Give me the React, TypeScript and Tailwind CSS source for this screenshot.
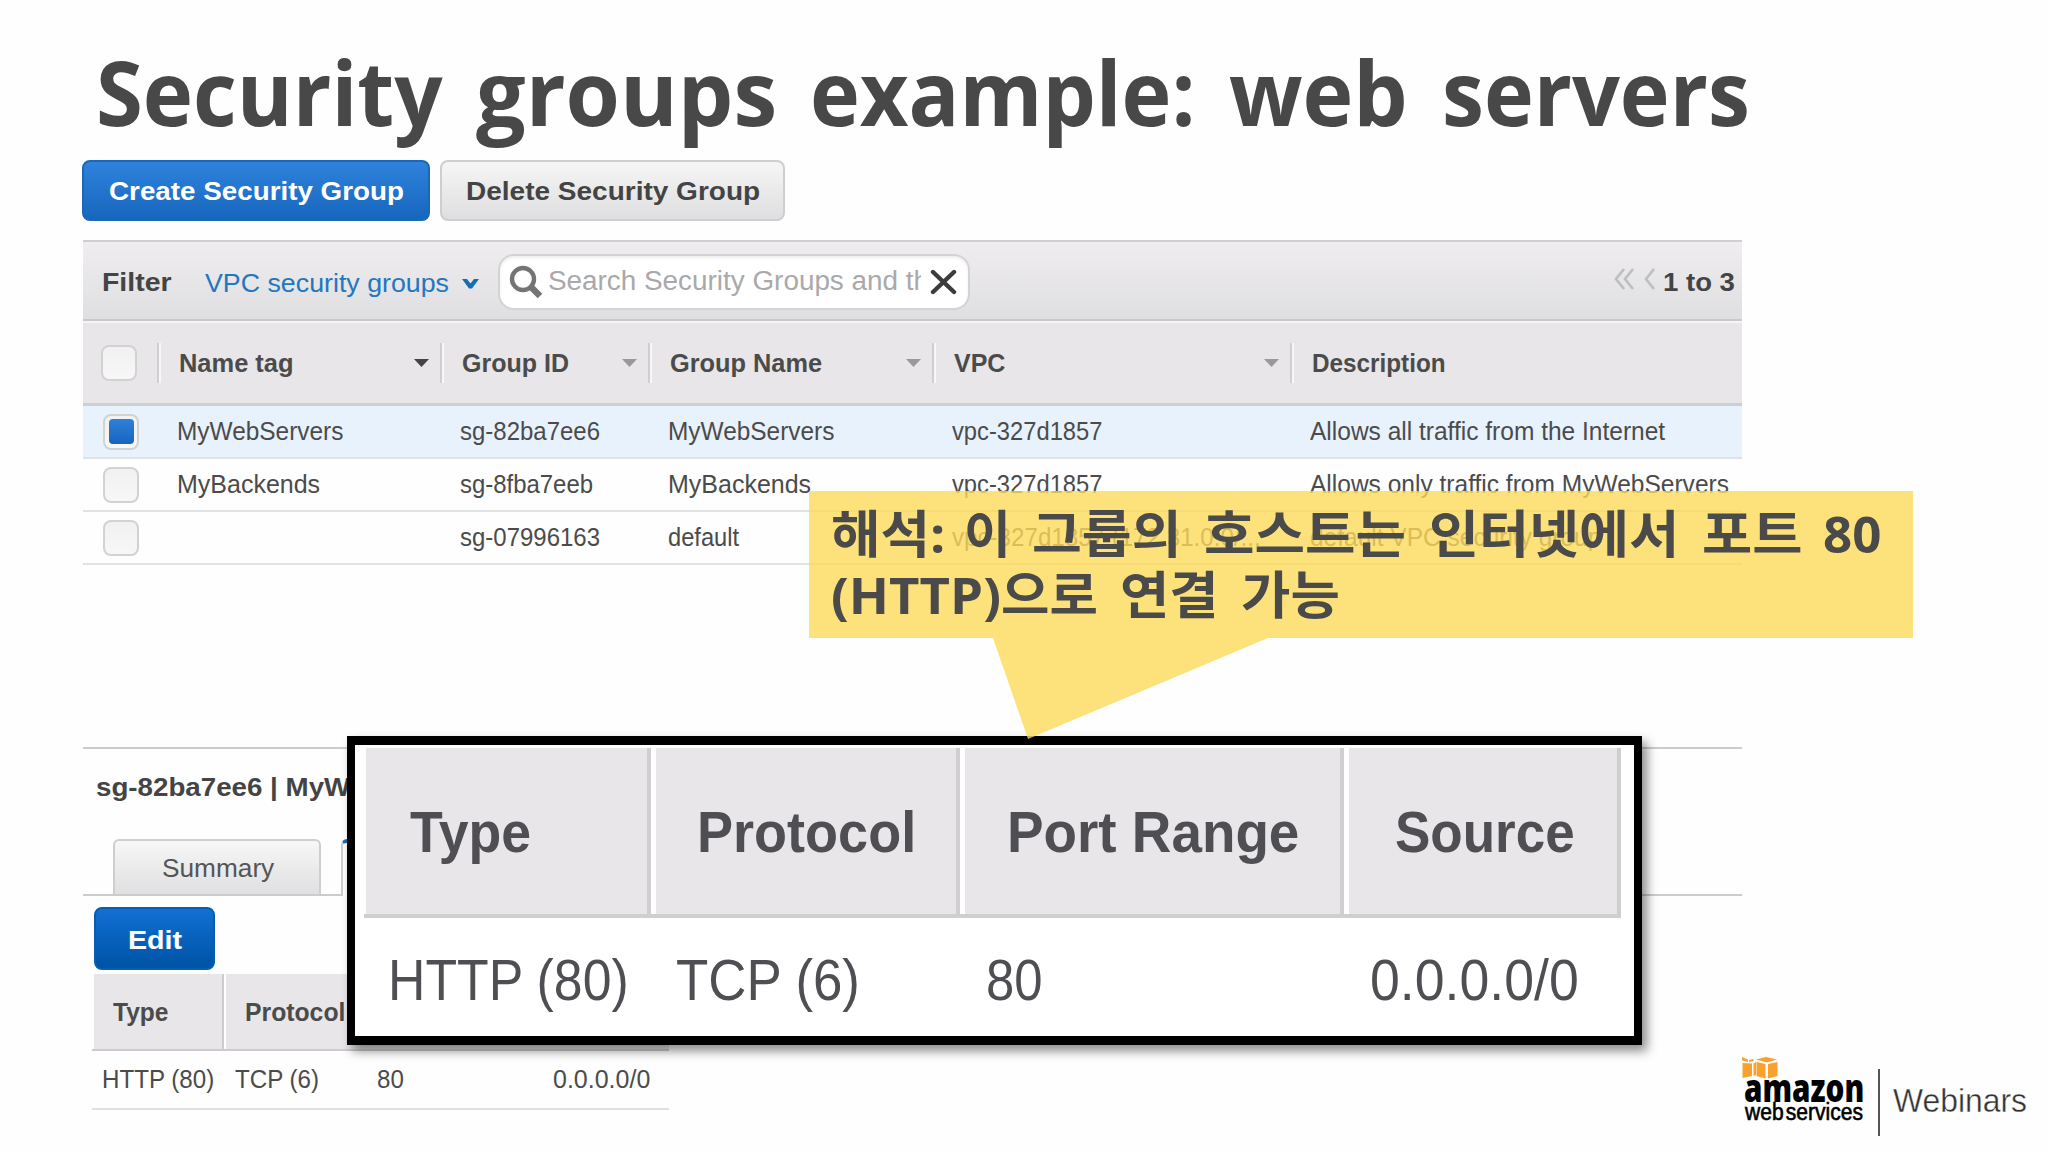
import { useLayoutEffect, useRef, useState } from "react";
import type { ReactNode } from "react";

/** Single line of text stretched or condensed horizontally to fill its box. */
function Fit({ className, children }: { className: string; children: ReactNode }) {
  const box = useRef<HTMLSpanElement>(null);
  const text = useRef<HTMLSpanElement>(null);
  const [scale, setScale] = useState(1);
  useLayoutEffect(() => {
    if (box.current && text.current) {
      setScale(box.current.offsetWidth / text.current.offsetWidth);
    }
  }, []);
  return (
    <span ref={box} className={`block shrink-0 ${className}`}>
      <span ref={text} className="inline-block origin-left whitespace-pre" style={{ transform: `scaleX(${scale})` }}>
        {children}
      </span>
    </span>
  );
}

function Checkbox({ checked = false }: { checked?: boolean }) {
  return (
    <span className="flex size-[36px] shrink-0 items-center justify-center rounded-lg border-2 border-[#d3d2d3] bg-linear-to-b from-[#f1f1f1] to-[#f7f7f7]">
      {checked && <span className="size-[25px] rounded bg-linear-to-b from-[#2f80d8] to-[#1564bd]" />}
    </span>
  );
}

function Arrow({ className }: { className: string }) {
  return (
    <svg viewBox="0 0 15 8" className={`h-2 w-[15px] ${className}`}>
      <path d="M0 0H15L7.5 8Z" fill="currentColor" />
    </svg>
  );
}

const headers = [
  { label: "Name tag", width: "w-[115px]", arrow: "text-[#444]" },
  { label: "Group ID", width: "w-[107px]", arrow: "text-[#999]" },
  { label: "Group Name", width: "w-[152px]", arrow: "text-[#999]" },
  { label: "VPC", width: "w-[51px]", arrow: "text-[#999]" },
  { label: "Description", width: "w-[134px]", arrow: "" },
];

const rows = [
  {
    checked: true,
    cells: [
      ["MyWebServers", "w-[166px]"],
      ["sg-82ba7ee6", "w-[140px]"],
      ["MyWebServers", "w-[166px]"],
      ["vpc-327d1857", "w-[150px]"],
      ["Allows all traffic from the Internet", "w-[355px]"],
    ],
  },
  {
    checked: false,
    cells: [
      ["MyBackends", "w-[143px]"],
      ["sg-8fba7eeb", "w-[133px]"],
      ["MyBackends", "w-[143px]"],
      ["vpc-327d1857", "w-[150px]"],
      ["Allows only traffic from MyWebServers", "w-[419px]"],
    ],
  },
  {
    checked: false,
    cells: [
      ["", "w-0"],
      ["sg-07996163", "w-[140px]"],
      ["default", "w-[71px]"],
      ["vpc-327d1857 (172.31.0.0/...", "w-[309px]"],
      ["default VPC security group", "w-[291px]"],
    ],
  },
];

function GroupTable() {
  return (
    <div className="text-[25px] text-[#4b4b4b]">
      <div className="grid h-[83px] grid-cols-[74px_283px_208px_284px_358px_451px] items-center border-b-3 border-[#cfced0] bg-[#e8e6e8]">
        <div className="pl-[18px]">
          <Checkbox />
        </div>
        {headers.map((h) => (
          <div key={h.label} className="flex h-10 items-center justify-between border-l-2 border-[#cfced0] pr-[11px]">
            <div className="flex h-full items-center border-l-2 border-[#f7f7f7] pl-[18px]">
              <Fit className={`font-bold leading-10 ${h.width}`}>{h.label}</Fit>
            </div>
            {h.arrow && <Arrow className={h.arrow} />}
          </div>
        ))}
      </div>
      {rows.map((row, i) => (
        <div
          key={i}
          className={`grid h-[53px] grid-cols-[74px_283px_208px_284px_358px_451px] items-center border-b-2 border-[#e1e2e3] ${row.checked ? "bg-[#e8f2fd]" : ""}`}
        >
          <div className="pl-[20px]">
            <Checkbox checked={row.checked} />
          </div>
          {row.cells.map(([text, width], j) => (
            <div key={j} className="-mt-[2px] pl-[20px]">
              {text && <Fit className={`leading-[48px] ${width}`}>{text}</Fit>}
            </div>
          ))}
        </div>
      ))}
    </div>
  );
}

function FilterBar() {
  return (
    <div className="flex h-[81px] items-center border-y-2 border-t-[#cfced0] border-b-[#c9c8ca] bg-linear-to-b from-[#efedef] to-[#dfdee0] pl-[19px] text-[26px]">
      <Fit className="mt-[3px] w-[70px] font-bold text-[#444]">Filter</Fit>
      <Fit className="mt-[6px] ml-[33px] w-[244px] text-[#2277bd]">VPC security groups</Fit>
      <svg viewBox="0 0 17 10" className="mt-[7px] ml-[13px] h-[10px] w-[17px]">
        <path d="M0 0H5L8.5 4.5L12 0H17L10 9.5H7Z" fill="#146eb4" />
      </svg>
      <div className="mt-[2px] ml-[19px] flex h-[56px] w-[472px] items-center rounded-[16px] border-2 border-[#d3d2d4] bg-white pl-[9px] shadow-[inset_0_2px_3px_#eee]">
        <svg viewBox="0 0 34 34" className="size-[34px]" fill="none" stroke="#747474">
          <circle cx="14" cy="14" r="11" strokeWidth="4.4" />
          <path d="M22 22L31 31" strokeWidth="6.5" />
        </svg>
        <div className="ml-[5px] w-[373px] overflow-hidden">
          <Fit className="w-[451px] text-[27px] text-[#a9a9a9]">Search Security Groups and their rul</Fit>
        </div>
        <svg viewBox="0 0 27 26" className="ml-[9px] h-[26px] w-[27px]" fill="none" stroke="#3c3c3c" strokeWidth="4.4" strokeLinecap="round">
          <path d="M3 3L24 23M24 3L3 23" />
        </svg>
      </div>
      <svg viewBox="0 0 42 22" className="mt-[-3px] ml-auto h-[22px] w-[42px]" fill="none" stroke="#bebebe" strokeWidth="2.6">
        <path d="M10 1L2 11L10 21M19 1L11 11L19 21M40 1L32 11L40 21" />
      </svg>
      <Fit className="mt-[3px] mr-[7px] ml-[7px] w-[72px] font-bold text-[#444]">1 to 3</Fit>
    </div>
  );
}

function RuleTable() {
  return (
    <div className="mt-[4px] ml-[9px] w-[577px] text-[25px] text-[#4b4b4b]">
      <div className="flex h-[77px] border-b-2 border-[#cccbcd] pl-[2px] font-bold">
        <div className="flex w-[130px] items-center border-r-2 border-[#cccbcd] bg-[#e8e6e8] pl-[19px]">
          <Fit className="mt-[3px] w-[56px]">Type</Fit>
        </div>
        <div className="ml-[2px] flex flex-1 items-center bg-[#e8e6e8] pl-[19px]">
          <Fit className="mt-[3px] w-[100px]">Protocol</Fit>
        </div>
      </div>
      <div className="flex h-[59px] items-center border-b-2 border-[#e0e0e1] pl-[10px]">
        <Fit className="w-[112px]">HTTP (80)</Fit>
        <Fit className="ml-[21px] w-[84px]">TCP (6)</Fit>
        <Fit className="ml-[58px] w-[27px]">80</Fit>
        <Fit className="ml-[149px] w-[97px]">0.0.0.0/0</Fit>
      </div>
    </div>
  );
}

function Magnified() {
  return (
    <div className="absolute top-[736px] left-[347px] h-[309px] w-[1295px] border-x-8 border-y-9 border-black bg-white pt-[3px] pl-[9px] text-[58px] text-[#4f4f53] shadow-[5px_6px_10px_rgba(0,0,0,0.45)]">
      <div className="flex h-[170px] w-[1257px] border-b-4 border-[#cfced0] pl-[2px] font-bold leading-[168px]">
        <div className="w-[285px] border-r-4 border-[#cfced0] bg-[#e8e6e8] pl-[44px]">
          <Fit className="w-[121px]">Type</Fit>
        </div>
        <div className="ml-[5px] w-[304px] border-r-4 border-[#cfced0] bg-[#e8e6e8] pl-[41px]">
          <Fit className="w-[219px]">Protocol</Fit>
        </div>
        <div className="ml-[5px] w-[379px] border-r-4 border-[#cfced0] bg-[#e8e6e8] pl-[42px]">
          <Fit className="w-[292px]">Port Range</Fit>
        </div>
        <div className="ml-[5px] flex-1 border-r-4 border-[#cfced0] bg-[#e8e6e8] pl-[46px]">
          <Fit className="w-[180px]">Source</Fit>
        </div>
      </div>
      <div className="flex pl-[24px] leading-[124px]">
        <Fit className="w-[241px]">HTTP (80)</Fit>
        <Fit className="ml-[47px] w-[184px]">TCP (6)</Fit>
        <Fit className="ml-[126px] w-[57px]">80</Fit>
        <Fit className="ml-[327px] w-[209px]">0.0.0.0/0</Fit>
      </div>
    </div>
  );
}

function Callout() {
  return (
    <div className="absolute top-[491px] left-[809px] h-[248px] w-[1104px]">
      <svg viewBox="0 0 1104 248" className="absolute inset-0 h-full w-full">
        <path d="M0 0H1104V147H459L219 248L184 147H0Z" fill="#fcd95a" fillOpacity="0.8" />
      </svg>
      <div className="relative pt-[12px] pl-[22px] font-['Open_Sans','Noto_Sans_CJK_KR',sans-serif] text-[51px] leading-[61px] font-bold text-[#4a4a4a]">
        <div className="flex h-[61px]">
          <Fit className="w-[133px] [word-spacing:4px]">{"해석: "}</Fit>
          <Fit className="w-[68px] [word-spacing:8px]">{"이 "}</Fit>
          <Fit className="w-[172px] [word-spacing:8px]">{"그룹의 "}</Fit>
          <Fit className="w-[225px] [word-spacing:8px]">{"호스트는 "}</Fit>
          <Fit className="w-[273px] [word-spacing:8px]">{"인터넷에서 "}</Fit>
          <Fit className="w-[121px] [word-spacing:6px]">{"포트 "}</Fit>
          <Fit className="w-[58px]">80</Fit>
        </div>
        <div className="flex h-[61px]">
          <Fit className="w-[289px] [word-spacing:8px]">{"(HTTP)으로 "}</Fit>
          <Fit className="w-[121px] [word-spacing:8px]">{"연결 "}</Fit>
          <Fit className="w-[99px]">가능</Fit>
        </div>
      </div>
    </div>
  );
}

function Logo() {
  return (
    <div className="absolute top-[1056px] left-[1741px] flex">
      <div className="w-[124px]">
        <svg viewBox="0 0 38 24" className="h-[24px] w-[38px]" fill="#f9a12e">
          <path d="M1 1L7 3.5V6L1 4.500ZM8 4L12 3L13 5L8 6Z" />
          <path d="M1.500 7L11 7.500V20L1.500 22ZM12.500 7.500L15 6V19L12.500 20Z" />
          <path d="M15 3.500L25 1L36 3.500L26 6.500Z" />
          <path d="M15.500 6L24.500 8V22.500L15.500 20ZM27 8L36.500 6V20L27 22.500Z" />
        </svg>
        <Fit className="mt-[-3px] ml-[3px] h-[26px] w-[120px] font-['Open_Sans',sans-serif] text-[38px] leading-[20px] font-extrabold text-black">amazon</Fit>
        <Fit className="ml-[4px] w-[118px] text-[23px] leading-[18px] text-black [-webkit-text-stroke:0.6px_black] [word-spacing:-4px]">web services</Fit>
      </div>
      <div className="mt-[13px] ml-[13px] h-[67px] w-[2px] bg-[#555]" />
      <Fit className="mt-[24px] ml-[13px] w-[134px] text-[34px] leading-[40px] text-[#333] [-webkit-text-stroke:0.4px_#fefefe]">Webinars</Fit>
    </div>
  );
}

export default function App() {
  return (
    <div className="relative h-[1152px] w-[2048px] overflow-hidden bg-[#fefefe] font-['Liberation_Sans',sans-serif]">
      <h1 className="flex h-[160px] pl-[96px] font-['Open_Sans',sans-serif] text-[90px] leading-[183px] font-bold text-[#484848] [word-spacing:12px]">
        <Fit className="w-[380px]">{"Security "}</Fit>
        <Fit className="w-[334px] [word-spacing:10px]">{"groups "}</Fit>
        <Fit className="w-[419px]">{"example: "}</Fit>
        <Fit className="w-[213px]">{"web "}</Fit>
        <Fit className="w-[308px]">servers</Fit>
      </h1>
      <main className="ml-[82px] w-[1660px] pl-px">
        <div className="-ml-px flex gap-[10px] text-[26px] font-bold leading-[58px]">
          <button className="h-[61px] w-[348px] rounded-lg border-2 border-[#1c68b5] bg-linear-to-b from-[#2e83dc] to-[#1766bd] pl-[25px] text-left text-white">
            <Fit className="w-[295px]">Create Security Group</Fit>
          </button>
          <button className="h-[61px] w-[345px] rounded-lg border-2 border-[#cfcecf] bg-linear-to-b from-[#f6f6f6] to-[#dfdee0] pl-[24px] text-left text-[#444]">
            <Fit className="w-[294px]">Delete Security Group</Fit>
          </button>
        </div>
        <div className="mt-[19px]">
          <FilterBar />
          <div className="h-[2px] bg-[#f6f5f6]" />
          <GroupTable />
        </div>
        <section className="mt-[182px] border-t-2 border-[#cdcccd]">
          <Fit className="mt-[22px] ml-[13px] w-[388px] text-[25.5px] leading-[32px] font-bold text-[#444]">sg-82ba7ee6 | MyWebServers</Fit>
          <div className="mt-[36px] flex h-[57px] border-b-2 border-[#cdcccd] pl-[30px]">
            <div className="h-[55px] w-[208px] rounded-t-md border-2 border-b-0 border-[#cfcecf] bg-linear-to-b from-[#f7f7f7] to-[#e0dfe1] pl-[47px] text-[26px] leading-[54px] text-[#555]">
              <Fit className="w-[112px]">Summary</Fit>
            </div>
            <div className="ml-[20px] h-[57px] w-[240px] rounded-t-md border-x-2 border-t-4 border-x-[#cfcecf] border-t-[#146eb4] bg-white" />
          </div>
          <button className="mt-[11px] ml-[11px] block h-[63px] w-[121px] rounded-lg border-2 border-[#0a5cb0] bg-linear-to-b from-[#1170d3] to-[#0053a5] pl-[32px] text-left text-[26px] font-bold leading-[62px] text-white">
            <Fit className="w-[54px]">Edit</Fit>
          </button>
          <RuleTable />
        </section>
      </main>
      <Magnified />
      <Callout />
      <Logo />
    </div>
  );
}
